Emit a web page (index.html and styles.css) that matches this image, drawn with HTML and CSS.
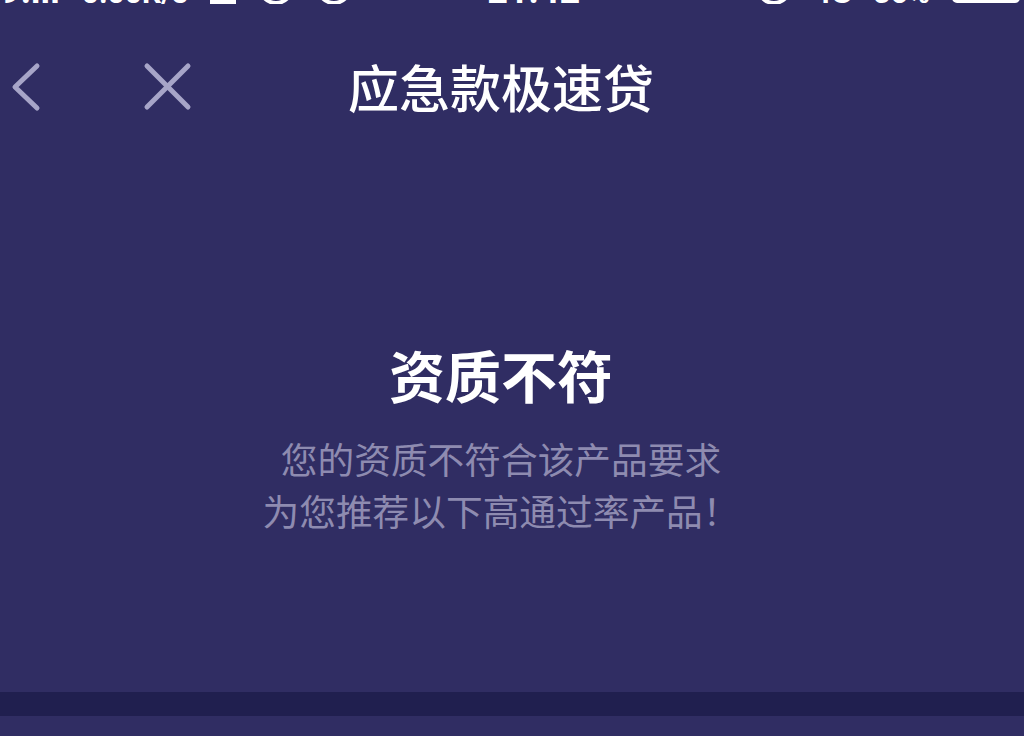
FILE: index.html
```html
<!DOCTYPE html>
<html lang="zh-CN">
<head>
    <meta charset="UTF-8">
    <meta name="viewport" content="width=device-width, initial-scale=1.0">
    <title>应急款极速贷</title>
    <link rel="stylesheet" href="styles.css">
</head>
<body>
    <div class="status-bar">
        <div class="status-left">
            <span class="status-text">9:ıll</span>
            <span class="status-small">0.00K/s</span>
            <span class="status-icon"></span>
            <span class="status-dot"></span>
            <span class="status-dot"></span>
        </div>
        <span class="status-text status-time">21:42</span>
        <div class="status-right">
            <span class="status-dot"></span>
            <span class="status-small">4G</span>
            <span class="status-small">36%</span>
            <span class="status-battery"></span>
        </div>
    </div>

    <div class="nav-bar">
        <button class="nav-btn back-btn" aria-label="返回">
            <svg width="34" height="52" viewBox="0 0 34 52">
                <polyline points="26,4 4,25 26,46" fill="none" stroke="currentColor" stroke-width="5" stroke-linecap="round" stroke-linejoin="round"/>
            </svg>
        </button>
        <button class="nav-btn close-btn" aria-label="关闭">
            <svg width="52" height="52" viewBox="0 0 52 52">
                <line x1="5" y1="5" x2="46" y2="46" stroke="currentColor" stroke-width="5" stroke-linecap="round"/>
                <line x1="46" y1="5" x2="5" y2="46" stroke="currentColor" stroke-width="5" stroke-linecap="round"/>
            </svg>
        </button>
        <h1 class="nav-title">应急款极速贷</h1>
    </div>

    <div class="result">
        <h2 class="result-title">资质不符</h2>
        <p class="result-desc">您的资质不符合该产品要求<br>为您推荐以下高通过率产品！</p>
    </div>

    <div class="divider"></div>
</body>
</html>
```

FILE: styles.css
```css
body {
    margin: 0;
    width: 1024px;
    height: 736px;
    overflow: hidden;
    background-color: #302d63;
    color: #ffffff;
    font-family: "Noto Sans CJK SC", "Noto Sans", sans-serif;
}

/* status bar: only the bottom edge of the glyphs shows */
.status-bar {
    height: 4px;
    overflow: hidden;
    display: flex;
    align-items: flex-end;
    justify-content: space-between;
    padding: 0 4px 0 0;
    font-family: "Roboto", "Noto Sans", sans-serif;
}

.status-left,
.status-right {
    display: flex;
    align-items: flex-end;
    gap: 22px;
}

.status-text {
    font-size: 36px;
    line-height: 36px;
    font-weight: 700;
    margin-bottom: -5px;
}

.status-time {
    margin-right: 40px;
}

.status-small {
    font-size: 30px;
    line-height: 30px;
    font-weight: 700;
    margin-bottom: -4px;
}

.status-icon {
    width: 26px;
    height: 30px;
    border-bottom: 4px solid #fff;
}

.status-dot {
    width: 28px;
    height: 28px;
    border-radius: 50%;
    border: 4px solid #fff;
    margin-bottom: -1px;
}

.status-battery {
    width: 60px;
    height: 26px;
    border: 4px solid #fff;
    border-radius: 5px;
    margin-bottom: 1px;
}

/* top navigation */
.nav-bar {
    position: relative;
    height: 100px;
    margin-top: 34px;
    display: flex;
    align-items: center;
}

.nav-btn {
    background: none;
    border: none;
    padding: 0;
    color: #a7a5c8;
    display: flex;
}

.back-btn {
    margin-left: 11px;
}

.close-btn {
    margin-left: 97px;
    margin-top: -2px;
}

.nav-title {
    position: absolute;
    left: 0;
    right: 22px;
    top: -2px;
    margin: 0;
    text-align: center;
    font-size: 51px;
    font-weight: 500;
    line-height: 100px;
    pointer-events: none;
}

/* empty-state message */
.result {
    padding-right: 22px;
    margin-top: 203px;
    text-align: center;
}

.result-title {
    margin: 0;
    font-size: 56px;
    font-weight: 700;
    line-height: 66px;
}

.result-desc {
    margin: 25px 0 0;
    font-size: 36.7px;
    line-height: 52px;
    color: #8e8bb0;
}

.divider {
    height: 24px;
    margin-top: 156px;
    background-color: #201f4f;
}
```
